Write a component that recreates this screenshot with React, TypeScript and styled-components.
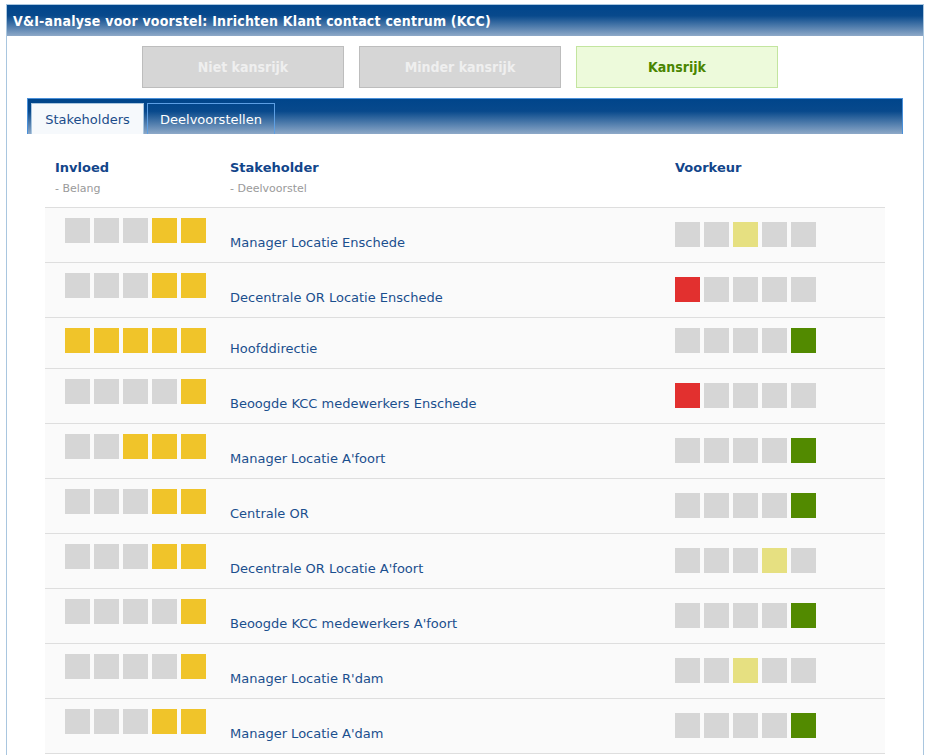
import React from 'react'
import styled, {createGlobalStyle} from 'styled-components'

const GlobalStyle = createGlobalStyle`
  html, body {
    margin: 0;
    padding: 0;
    background: #fff;
  }
  body {
    font-family: "DejaVu Sans", Verdana, sans-serif;
    font-size: 13px;
    color: #1a4f8e;
  }
`

const Page = styled.div`
  padding: 4px 6px 0 6px;
`

const Panel = styled.div`
  border: 1px solid #a9c6df;
  border-bottom: none;
  min-height: 760px;
`

const TitleBar = styled.div`
  height: 31px;
  padding-left: 6px;
  display: flex;
  align-items: center;
  background: linear-gradient(#00458b 0%, #08498c 35%, #8ea9c8 100%);
  color: #fff;
  font-family: "DejaVu Sans Condensed", "Liberation Sans", sans-serif;
  font-weight: bold;
  font-size: 14px;
  letter-spacing: 0.22px;
`

const ButtonRow = styled.div`
  display: flex;
  gap: 15px;
  padding: 10px 0 0 135px;
`

const StatusButton = styled.div<{$active?: boolean}>`
  box-sizing: border-box;
  width: 202px;
  height: 42px;
  display: flex;
  align-items: center;
  justify-content: center;
  font-family: "DejaVu Sans Condensed", "Liberation Sans", sans-serif;
  font-weight: bold;
  font-size: 14px;
  border: 1px solid ${p => p.$active ? '#c3e59f' : '#bdbdbd'};
  background: ${p => p.$active ? '#edfadb' : '#d6d6d6'};
  color: ${p => p.$active ? '#4a8500' : '#efefef'};
`

const TabBar = styled.div`
  margin: 10px 20px 0 20px;
  border: 1px solid #4a90d9;
  border-bottom: none;
  padding: 4px 0 0 3px;
  box-sizing: border-box;
  height: 36px;
  display: flex;
  align-items: flex-end;
  gap: 3px;
  background: linear-gradient(#00458b 0%, #08498c 35%, #8ea9c8 100%);
`

const Tab = styled.div<{$active?: boolean; $width: number}>`
  box-sizing: border-box;
  width: ${p => p.$width}px;
  height: 31px;
  display: flex;
  align-items: center;
  justify-content: center;
  padding-top: 1px;
  border: 1px solid ${p => p.$active ? '#a9c6df' : '#5d9fe4'};
  border-bottom: none;
  background: ${p => p.$active ? '#f6f9fc' : 'transparent'};
  color: ${p => p.$active ? '#1b4c8a' : '#fff'};
  font-size: 13px;
`

const TabPanel = styled.div`
  margin: 0 20px;
  padding: 0 18px;
`

const Grid = styled.div`
  display: grid;
  grid-template-columns: 185px 445px 1fr;
`

const HeaderRow = styled(Grid)`
  padding: 26px 0 12px 0;
  border-bottom: 1px solid #dedede;
`

const HeadCell = styled.div<{$pad?: number}>`
  padding-left: ${p => p.$pad ?? 0}px;
`

const HeadTitle = styled.div`
  font-weight: bold;
  font-size: 13px;
  line-height: 16px;
  color: #12458a;
`

const HeadSub = styled.div`
  margin-top: 6px;
  font-size: 11px;
  line-height: 13px;
  color: #9a9a9a;
`

const Row = styled(Grid)<{$height: number}>`
  min-height: ${p => p.$height}px;
  align-items: start;
  background: #fafafa;
  border-bottom: 1px solid #dedede;
`

const ScoreCell = styled.div<{$top: number; $left?: number}>`
  display: flex;
  gap: 4px;
  padding-top: ${p => p.$top}px;
  padding-left: ${p => p.$left ?? 0}px;
`

const Square = styled.div<{$color: string}>`
  width: 25px;
  height: 25px;
  background: ${p => p.$color};
`

const Name = styled.div`
  align-self: end;
  padding-bottom: 11px;
  line-height: 16px;
  color: #1a4f8e;
`

const GRAY = '#d6d6d6'
const YELLOW = '#f0c42a'
const PALE = '#e6e081'
const RED = '#e2302f'
const GREEN = '#528a00'

type Stakeholder = {
    name: string
    invloed: number
    voorkeur: number
    short?: boolean
}

const stakeholders: Stakeholder[] = [
    {name: 'Manager Locatie Enschede', invloed: 2, voorkeur: 2},
    {name: 'Decentrale OR Locatie Enschede', invloed: 2, voorkeur: 0},
    {name: 'Hoofddirectie', invloed: 5, voorkeur: 4, short: true},
    {name: 'Beoogde KCC medewerkers Enschede', invloed: 1, voorkeur: 0},
    {name: "Manager Locatie A'foort", invloed: 3, voorkeur: 4},
    {name: 'Centrale OR', invloed: 2, voorkeur: 4},
    {name: "Decentrale OR Locatie A'foort", invloed: 2, voorkeur: 3},
    {name: "Beoogde KCC medewerkers A'foort", invloed: 1, voorkeur: 4},
    {name: "Manager Locatie R'dam", invloed: 1, voorkeur: 2},
    {name: "Manager Locatie A'dam", invloed: 2, voorkeur: 4},
]

const preferenceColor = (index: number) => {
    if (index === 0) return RED
    if (index === 4) return GREEN
    return PALE
}

const Invloed = ({count}: {count: number}) => (
    <ScoreCell $top={10} $left={20}>
        {[0, 1, 2, 3, 4].map(i => <Square key={i} $color={i >= 5 - count ? YELLOW : GRAY}/>)}
    </ScoreCell>
)

const Voorkeur = ({index, top}: {index: number; top: number}) => (
    <ScoreCell $top={top}>
        {[0, 1, 2, 3, 4].map(i => <Square key={i} $color={i === index ? preferenceColor(index) : GRAY}/>)}
    </ScoreCell>
)

export default function App() {
    return <Page>
        <GlobalStyle/>
        <Panel>
            <TitleBar>V&amp;I-analyse voor voorstel: Inrichten Klant contact centrum (KCC)</TitleBar>
            <ButtonRow>
                <StatusButton>Niet kansrijk</StatusButton>
                <StatusButton>Minder kansrijk</StatusButton>
                <StatusButton $active>Kansrijk</StatusButton>
            </ButtonRow>
            <TabBar>
                <Tab $active $width={113}>Stakeholders</Tab>
                <Tab $width={128}>Deelvoorstellen</Tab>
            </TabBar>
            <TabPanel>
                <HeaderRow>
                    <HeadCell $pad={10}>
                        <HeadTitle>Invloed</HeadTitle>
                        <HeadSub>- Belang</HeadSub>
                    </HeadCell>
                    <HeadCell>
                        <HeadTitle>Stakeholder</HeadTitle>
                        <HeadSub>- Deelvoorstel</HeadSub>
                    </HeadCell>
                    <HeadCell>
                        <HeadTitle>Voorkeur</HeadTitle>
                    </HeadCell>
                </HeaderRow>
                {stakeholders.map(s => (
                    <Row key={s.name} $height={s.short ? 50 : 54}>
                        <Invloed count={s.invloed}/>
                        <Name>{s.name}</Name>
                        <Voorkeur index={s.voorkeur} top={s.short ? 10 : 14}/>
                    </Row>
                ))}
            </TabPanel>
        </Panel>
    </Page>
}
